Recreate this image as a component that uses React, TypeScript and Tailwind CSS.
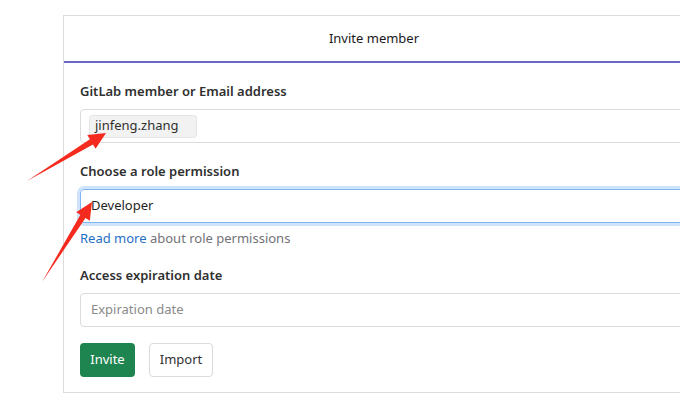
import React from "react";

type Pt = [number, number];

function arrowPoints(t: Pt, p: Pt, h = 17, w1 = 3, w2 = 8): string {
  const dx = p[0] - t[0];
  const dy = p[1] - t[1];
  const L = Math.hypot(dx, dy);
  const ux = dx / L;
  const uy = dy / L;
  const nx = -uy;
  const ny = ux;
  const bx = t[0] + ux * (L - h);
  const by = t[1] + uy * (L - h);
  const pts: Pt[] = [
    t,
    [bx + nx * w1, by + ny * w1],
    [bx + nx * w2, by + ny * w2],
    p,
    [bx - nx * w2, by - ny * w2],
    [bx - nx * w1, by - ny * w1],
  ];
  return pts.map((q) => `${q[0].toFixed(1)},${q[1].toFixed(1)}`).join(" ");
}

export default function App() {
  const font = { fontFamily: '"Noto Sans", "Open Sans", Arial, sans-serif' };
  return (
    <div className="relative w-[680px] h-[418px] overflow-hidden bg-white" style={font}>
      <div className="ml-[63px] mt-[15px] w-[622px] border border-[#dbdbdb] bg-white">
        <div className="h-[47px] border-b-2 border-[#6b67c6] flex items-center justify-center text-[13px] text-[#1a1a1a]">
          Invite member
        </div>
        <div className="pl-[16px] pt-[18px] pb-[15px]">
          <div className="h-[20px] leading-[20px] text-[13px] font-semibold text-[#303030]">
            GitLab member or Email address
          </div>
          <div className="mt-[8px] h-[34px] border border-[#dbdbdb] rounded-l-[4px] flex items-center pl-[8px]">
            <div className="h-[23px] w-[108px] bg-[#f2f2f2] border border-[#e6e6e6] rounded-[3px] flex items-center pl-[5px] text-[13px] text-[#303030]">
              jinfeng.zhang
            </div>
          </div>
          <div className="mt-[18px] h-[20px] leading-[20px] text-[13px] font-semibold text-[#303030]">
            Choose a role permission
          </div>
          <div className="mt-[8px] h-[34px] border border-[#7fb6f0] rounded-l-[4px] shadow-[0_0_0_3px_#cfe4fc] flex items-center pl-[10px] text-[13px] text-[#1f1f1f]">
            Developer
          </div>
          <div className="mt-[5px] h-[20px] leading-[20px] text-[13px] text-[#737278]">
            <span className="text-[#1f6fc5]">Read more</span> about role permissions
          </div>
          <div className="mt-[17px] h-[20px] leading-[20px] text-[13px] font-semibold text-[#303030]">
            Access expiration date
          </div>
          <div className="mt-[8px] h-[34px] border border-[#dbdbdb] rounded-l-[4px] flex items-center pl-[10px] text-[13px] text-[#8a8a8a]">
            Expiration date
          </div>
          <div className="mt-[16px] flex gap-[14px]">
            <div className="h-[34px] w-[55px] rounded-[4px] bg-[#1f8550] text-white text-[13px] flex items-center justify-center">
              Invite
            </div>
            <div className="h-[34px] w-[64px] rounded-[4px] border border-[#dbdbdb] bg-white text-[#303030] text-[13px] flex items-center justify-center">
              Import
            </div>
          </div>
        </div>
      </div>
      <svg className="absolute left-0 top-0 pointer-events-none" width="680" height="418">
        <polygon points={arrowPoints([27, 181], [106, 133])} fill="#f52a1f" />
        <polygon points={arrowPoints([42, 282], [92, 202])} fill="#f52a1f" />
      </svg>
    </div>
  );
}
